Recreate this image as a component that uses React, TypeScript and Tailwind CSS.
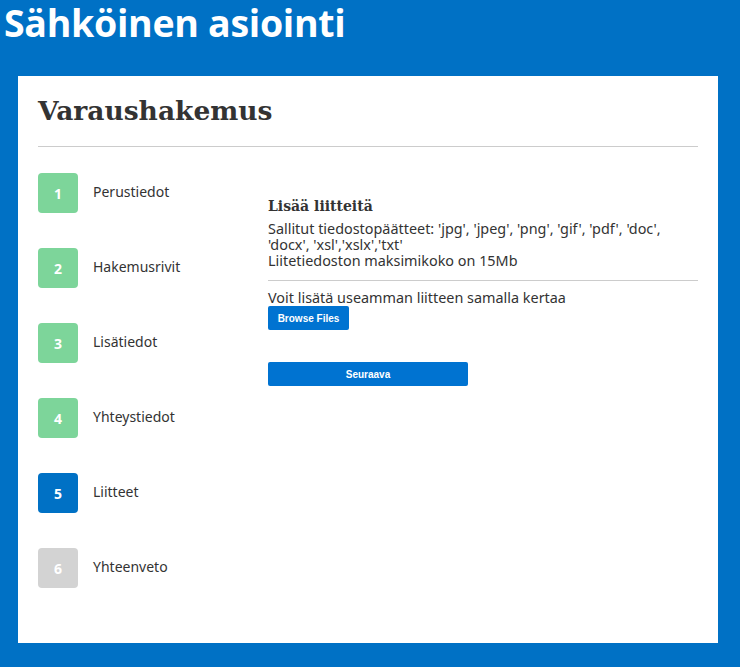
import React from "react";

const steps = [
  { n: 1, label: "Perustiedot", state: "done" },
  { n: 2, label: "Hakemusrivit", state: "done" },
  { n: 3, label: "Lisätiedot", state: "done" },
  { n: 4, label: "Yhteystiedot", state: "done" },
  { n: 5, label: "Liitteet", state: "active" },
  { n: 6, label: "Yhteenveto", state: "todo" },
];

export default function App() {
  return (
    <div className="min-h-[667px] w-[740px] bg-[#0071c5] flex flex-col">
      <div className="h-[76px] pl-[4px] pt-[3px]">
        <h1 className="text-[37.5px] leading-[40px] font-bold text-white font-['Open_Sans',sans-serif] tracking-[-0.3px]">
          Sähköinen asiointi
        </h1>
      </div>
      <div className="ml-[18px] w-[700px] h-[567px] bg-white px-5 pt-[15px]">
        <h2 className="text-[26.5px] leading-[40px] font-bold text-[#333] font-['DejaVu_Serif',serif] pb-[15px] border-b border-[#cccccc]">
          Varaushakemus
        </h2>
        <div className="flex pt-[26px]">
          <div className="w-[230px] flex flex-col gap-[35px]">
            {steps.map((s) => (
              <div key={s.n} className="flex items-center gap-[15px]">
                <div
                  className={
                    "w-10 h-10 rounded-[4px] flex items-center justify-center text-white font-bold text-[14px] font-['Open_Sans',sans-serif] " +
                    (s.state === "done"
                      ? "bg-[#7dd59a]"
                      : s.state === "active"
                      ? "bg-[#0071c5]"
                      : "bg-[#d3d3d3]")
                  }
                >
                  {s.n}
                </div>
                <span className="text-[14px] text-[#333] font-['Noto_Sans',sans-serif] -mt-[3px]">{s.label}</span>
              </div>
            ))}
          </div>
          <div className="flex-1 pt-[23px] font-['Noto_Sans',sans-serif] text-[#333]">
            <h3 className="text-[14px] font-bold font-['DejaVu_Serif',serif] leading-[20px]">Lisää liitteitä</h3>
            <p className="mt-[5px] text-[14.4px] leading-[16px]">
              Sallitut tiedostopäätteet: 'jpg', 'jpeg', 'png', 'gif', 'pdf', 'doc',
              <br />
              'docx', 'xsl','xslx','txt'
              <br />
              Liitetiedoston maksimikoko on 15Mb
            </p>
            <div className="mt-[11px] border-t border-[#cccccc]" />
            <p className="mt-[9px] text-[14.4px] leading-[16px]">Voit lisätä useamman liitteen samalla kertaa</p>
            <button className="block mt-0 h-[24px] w-[81px] bg-[#0073d1] rounded-[2px] text-white text-[10px] font-bold font-['Liberation_Sans',sans-serif]">
              Browse Files
            </button>
            <div className="mt-[32px]">
              <button className="block h-[24px] w-[200px] bg-[#0073d1] rounded-[2px] text-white text-[10px] font-bold font-['Liberation_Sans',sans-serif]">
                Seuraava
              </button>
            </div>
          </div>
        </div>
      </div>
    </div>
  );
}
